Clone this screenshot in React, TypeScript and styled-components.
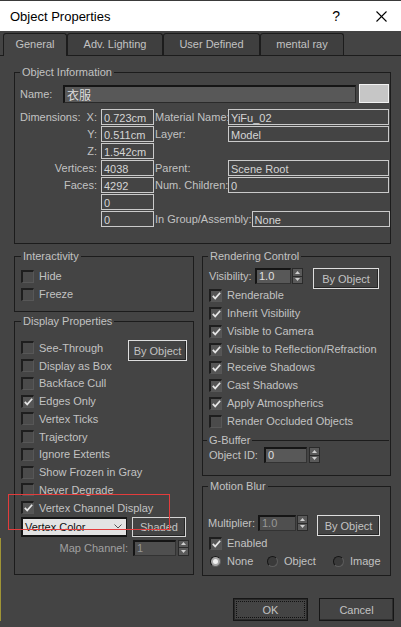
import React from "react";
import styled, { createGlobalStyle } from "styled-components";

const FONT = `"Liberation Sans", Arial, "Noto Sans CJK SC", sans-serif`;
const TEXT = "#c2c2c2";

const GlobalStyle = createGlobalStyle`
  html, body { margin: 0; padding: 0; background: #444444; }
  body { font-family: ${FONT}; font-size: 11px; color: ${TEXT}; }
  * { box-sizing: border-box; }
`;

const Window = styled.div`
  position: relative;
  width: 401px;
  height: 627px;
  overflow: hidden;
  background: #444444;
  font-family: ${FONT};
  font-size: 11px;
  color: ${TEXT};
  display: flex;
  flex-direction: column;
`;

const TitleBar = styled.div`
  height: 31px;
  flex: none;
  background: #ffffff;
  border-top: 1px solid #3a3a3a;
  display: flex;
  align-items: center;
  padding: 0 14px 0 10px;
  color: #000;
  font-size: 13px;
`;
const TitleText = styled.div`
  flex: 1;
`;
const TitleButtons = styled.div`
  display: flex;
  align-items: center;
  gap: 36px;
`;
const HelpGlyph = styled.span`
  font-size: 14px;
  line-height: 14px;
`;

const TabStrip = styled.div`
  height: 25px;
  flex: none;
  display: flex;
  align-items: flex-end;
  padding-left: 3px;
  border-bottom: 1px solid #1c1c1c;
`;
const Tab = styled.div<{ $active?: boolean; $w: number }>`
  width: ${(p) => p.$w}px;
  height: ${(p) => (p.$active ? 23 : 22)}px;
  margin-bottom: ${(p) => (p.$active ? -1 : 0)}px;
  border: 1px solid #1c1c1c;
  border-bottom: none;
  border-radius: 3px 3px 0 0;
  background: ${(p) => (p.$active ? "#444444" : "#3f3f3f")};
  display: flex;
  align-items: flex-start;
  justify-content: center;
  padding-top: 4px;
  color: ${TEXT};
  font-size: 11px;
  line-height: 13px;
`;

const Panel = styled.div`
  flex: 1;
  display: flex;
  flex-direction: column;
  padding: 10px 10px 0 14px;
`;

const Group = styled.fieldset<{ $pad: string; $mt?: number }>`
  margin: ${(p) => p.$mt ?? 0}px 0 0 0;
  min-width: 0;
  border: 1px solid #1c1c1c;
  padding: ${(p) => p.$pad};
`;
const Legend = styled.legend<{ $ml?: number }>`
  padding: 0 2px;
  margin-left: ${(p) => p.$ml ?? 0}px;
  font-size: 11px;
  line-height: 13px;
  color: ${TEXT};
`;
const SubGroup = styled.fieldset`
  margin: 4px -5px 0 -6px;
  min-width: 0;
  border: none;
  border-top: 1px solid #1c1c1c;
  padding: 0 0 0 6px;
`;

/* Object information */
const NameRow = styled.div`
  display: flex;
  align-items: center;
  height: 19px;
`;
const NameLabel = styled.span`
  width: 43px;
  flex: none;
`;
const NameField = styled.div`
  flex: 1;
  height: 18px;
  background: #585858;
  border-top: 2px solid #151515;
  border-left: 2px solid #151515;
  border-right: 1px solid #2a2a2a;
  border-bottom: 1px solid #2a2a2a;
  padding-left: 2px;
  color: #dedede;
  font-family: "Noto Sans CJK SC", ${FONT};
  font-size: 12px;
  line-height: 15px;
`;
const Swatch = styled.div`
  width: 30px;
  height: 19px;
  margin-left: 3px;
  flex: none;
  background: #c6c6c6;
  border: 1px solid #f2f2f2;
`;
const InfoGrid = styled.div`
  display: grid;
  grid-template-columns: 81px 53px 74px 161px;
  grid-auto-rows: 16px;
  row-gap: 1px;
  margin-top: 6px;
`;
const LeftLabel = styled.div<{ $split?: boolean }>`
  display: flex;
  align-items: center;
  justify-content: ${(p) => (p.$split ? "space-between" : "flex-end")};
  padding-right: 4px;
  white-space: nowrap;
`;
const RightLabel = styled.div`
  display: flex;
  align-items: center;
  padding-left: 1px;
  white-space: nowrap;
`;
const BoxField = styled.div<{ $w?: number }>`
  height: 16px;
  ${(p) => (p.$w ? `width: ${p.$w}px; flex: none;` : "")}
  border: 1px solid #cacaca;
  padding: 1px 0 0 2px;
  line-height: 14px;
  color: #d4d4d4;
  white-space: nowrap;
  overflow: hidden;
`;
const Empty = styled.div``;
const GroupCell = styled.div`
  grid-column: 3 / 5;
  display: flex;
  align-items: center;
  justify-content: space-between;
  padding-left: 1px;
  white-space: nowrap;
`;

/* columns */
const Columns = styled.div`
  display: grid;
  grid-template-columns: 180px 189px;
  column-gap: 8px;
  margin-top: 6px;
  align-items: start;
`;
const Column = styled.div`
  display: flex;
  flex-direction: column;
`;

/* checkboxes */
const CheckRow = styled.div<{ $h: number; $between?: boolean }>`
  height: ${(p) => p.$h}px;
  display: flex;
  align-items: center;
  gap: 5px;
  white-space: nowrap;
  justify-content: ${(p) => (p.$between ? "space-between" : "flex-start")};
`;
const CheckBox = styled.span<{ $checked?: boolean }>`
  width: 13px;
  height: 13px;
  flex: none;
  background: ${(p) => (p.$checked ? "#555555" : "#4b4b4b")};
  border-top: 2px solid #1e1e1e;
  border-left: 2px solid #1e1e1e;
  border-right: 1px solid #575757;
  border-bottom: 1px solid #575757;
  display: flex;
  align-items: center;
  justify-content: center;
`;
const CheckPair = styled.span`
  display: flex;
  align-items: center;
  gap: 5px;
`;

const CheckMark = () => (
  <svg width="9" height="8" viewBox="0 0 9 8">
    <polyline points="0.8,3.8 3.2,6.4 8.2,0.8" fill="none" stroke="#e6e6e6" strokeWidth="1.7" />
  </svg>
);

const Check = ({ label, checked, h }: { label: string; checked?: boolean; h: number }) => (
  <CheckRow $h={h}>
    <CheckBox $checked={checked}>{checked && <CheckMark />}</CheckBox>
    <span>{label}</span>
  </CheckRow>
);

/* buttons */
const ByObjectButton = styled.div<{ $w: number; $ml?: number }>`
  width: ${(p) => p.$w}px;
  height: 21px;
  flex: none;
  margin-left: ${(p) => p.$ml ?? 0}px;
  border: 1px solid #dedede;
  box-shadow: inset -1px -1px 0 #262626;
  background: #444444;
  display: flex;
  align-items: center;
  justify-content: center;
  color: ${TEXT};
  white-space: nowrap;
`;
const TopButton = styled(ByObjectButton)`
  align-self: flex-start;
  margin-top: 1px;
`;

/* spinners */
const Row = styled.div<{ $h: number; $mt?: number; $end?: boolean }>`
  height: ${(p) => p.$h}px;
  margin-top: ${(p) => p.$mt ?? 0}px;
  display: flex;
  align-items: flex-start;
  justify-content: ${(p) => (p.$end ? "flex-end" : "flex-start")};
  white-space: nowrap;
`;
const RowLabel = styled.span<{ $w?: number; $ml?: number; $dim?: boolean }>`
  ${(p) => (p.$w !== undefined ? `width: ${p.$w}px; flex: none;` : "")}
  margin-left: ${(p) => p.$ml ?? 0}px;
  line-height: 16px;
  color: ${(p) => (p.$dim ? "#a0a0a0" : TEXT)};
`;
const SpinWrap = styled.div<{ $gap: number }>`
  display: flex;
  gap: ${(p) => p.$gap}px;
  flex: none;
`;
const SpinField = styled.div<{ $w: number; $dim?: boolean }>`
  width: ${(p) => p.$w}px;
  height: 16px;
  background: ${(p) => (p.$dim ? "#4f4f4f" : "#585858")};
  border-top: 2px solid #151515;
  border-left: 2px solid #151515;
  border-right: 1px solid #333;
  border-bottom: 1px solid #333;
  padding-left: 2px;
  line-height: 12px;
  color: ${(p) => (p.$dim ? "#979797" : "#e0e0e0")};
`;
const Arrows = styled.div`
  width: 11px;
  height: 16px;
  display: flex;
  flex-direction: column;
  border: 1px solid #2a2a2a;
  background: #5a5a5a;
`;
const ArrowHalf = styled.div`
  flex: 1;
  display: flex;
  align-items: center;
  justify-content: center;
  & + & {
    border-top: 1px solid #2a2a2a;
  }
`;

const Spin = ({ value, w, dim, gap = 1 }: { value: string; w: number; dim?: boolean; gap?: number }) => (
  <SpinWrap $gap={gap}>
    <SpinField $w={w} $dim={dim}>{value}</SpinField>
    <Arrows>
      <ArrowHalf>
        <svg width="5" height="3" viewBox="0 0 5 3">
          <polygon points="2.5,0 5,3 0,3" fill="#cfcfcf" />
        </svg>
      </ArrowHalf>
      <ArrowHalf>
        <svg width="5" height="3" viewBox="0 0 5 3">
          <polygon points="0,0 5,0 2.5,3" fill="#cfcfcf" />
        </svg>
      </ArrowHalf>
    </Arrows>
  </SpinWrap>
);

/* dropdown */
const SelectRow = styled.div`
  display: flex;
  height: 20px;
  gap: 5px;
`;
const Select = styled.div`
  width: 106px;
  height: 20px;
  background: #e3e3e3;
  border: 2px solid #151515;
  border-right-width: 1px;
  color: #111;
  display: flex;
  align-items: center;
  justify-content: space-between;
  padding: 0 4px 0 2px;
`;
const ShadedButton = styled.div`
  width: 54px;
  height: 20px;
  border: 1px solid #d4d4d4;
  box-shadow: inset -1px -1px 0 #262626;
  background: #444444;
  display: flex;
  align-items: center;
  justify-content: center;
  color: ${TEXT};
`;

/* radios */
const RadioRow = styled.div`
  height: 18px;
  display: flex;
  align-items: center;
  margin-left: 1px;
`;
const RadioItem = styled.span<{ $w?: number }>`
  ${(p) => (p.$w ? `width: ${p.$w}px;` : "")}
  display: flex;
  align-items: center;
  gap: 6px;
`;
const RadioDot = styled.span<{ $on?: boolean }>`
  width: 11px;
  height: 11px;
  flex: none;
  border-radius: 50%;
  background: ${(p) => (p.$on ? "#a8a8a8" : "#3a3a3a")};
  border: 1px solid #161616;
  border-right-color: #5c5c5c;
  border-bottom-color: #5c5c5c;
  display: flex;
  align-items: center;
  justify-content: center;
`;
const RadioCenter = styled.span`
  width: 5px;
  height: 5px;
  border-radius: 50%;
  background: #f2f2f2;
`;

/* footer */
const Footer = styled.div`
  display: flex;
  justify-content: flex-end;
  gap: 11px;
  margin-top: 22px;
  margin-right: -3px;
`;
const DialogButton = styled.div<{ $default?: boolean }>`
  position: relative;
  width: 75px;
  height: 23px;
  background: #444444;
  border: 1px solid #161616;
  box-shadow: ${(p) => (p.$default ? "inset 0 0 0 1px #2a2a2a" : "inset -1px -1px 0 #2e2e2e")};
  display: flex;
  align-items: center;
  justify-content: center;
  color: ${TEXT};
`;
const FocusRing = styled.span`
  position: absolute;
  inset: 2px;
  border: 1px dotted #111;
`;

/* overlays */
const Annotation = styled.div`
  position: absolute;
  left: 8px;
  top: 494px;
  width: 162px;
  height: 36px;
  border: 1px solid #e33c3c;
  pointer-events: none;
`;
const EdgeLine = styled.div`
  position: absolute;
  left: 0;
  top: 538px;
  width: 1px;
  height: 83px;
  background: #a09536;
`;

export default function App() {
  return (
    <>
      <GlobalStyle />
      <Window>
        <TitleBar>
          <TitleText>Object Properties</TitleText>
          <TitleButtons>
            <HelpGlyph>?</HelpGlyph>
            <svg width="11" height="11" viewBox="0 0 11 11">
              <line x1="0.5" y1="0.5" x2="10.5" y2="10.5" stroke="#000" strokeWidth="1.1" />
              <line x1="10.5" y1="0.5" x2="0.5" y2="10.5" stroke="#000" strokeWidth="1.1" />
            </svg>
          </TitleButtons>
        </TitleBar>

        <TabStrip>
          <Tab $active $w={64}>General</Tab>
          <Tab $w={96}>Adv. Lighting</Tab>
          <Tab $w={97}>User Defined</Tab>
          <Tab $w={84}>mental ray</Tab>
        </TabStrip>

        <Panel>
          <Group $pad="5px 1px 16px 5px">
            <Legend>Object Information</Legend>
            <NameRow>
              <NameLabel>Name:</NameLabel>
              <NameField>衣服</NameField>
              <Swatch />
            </NameRow>
            <InfoGrid>
              <LeftLabel $split>
                <span>Dimensions:</span>
                <span>X:</span>
              </LeftLabel>
              <BoxField>0.723cm</BoxField>
              <RightLabel>Material Name:</RightLabel>
              <BoxField>YiFu_02</BoxField>

              <LeftLabel>Y:</LeftLabel>
              <BoxField>0.511cm</BoxField>
              <RightLabel>Layer:</RightLabel>
              <BoxField>Model</BoxField>

              <LeftLabel>Z:</LeftLabel>
              <BoxField>1.542cm</BoxField>
              <Empty />
              <Empty />

              <LeftLabel>Vertices:</LeftLabel>
              <BoxField>4038</BoxField>
              <RightLabel>Parent:</RightLabel>
              <BoxField>Scene Root</BoxField>

              <LeftLabel>Faces:</LeftLabel>
              <BoxField>4292</BoxField>
              <RightLabel>Num. Children:</RightLabel>
              <BoxField>0</BoxField>

              <Empty />
              <BoxField>0</BoxField>
              <Empty />
              <Empty />

              <Empty />
              <BoxField>0</BoxField>
              <GroupCell>
                <span>In Group/Assembly:</span>
                <BoxField $w={138}>None</BoxField>
              </GroupCell>
            </InfoGrid>
          </Group>

          <Columns>
            <Column>
              <Group $pad="4px 6px 8px 6px">
                <Legend>Interactivity</Legend>
                <Check h={18} label="Hide" />
                <Check h={18} label="Freeze" />
              </Group>

              <Group $pad="11px 6px 18px 6px" $mt={3}>
                <Legend>Display Properties</Legend>
                <CheckRow $h={17.75} $between>
                  <CheckPair>
                    <CheckBox />
                    <span>See-Through</span>
                  </CheckPair>
                  <TopButton $w={59}>By Object</TopButton>
                </CheckRow>
                <Check h={17.75} label="Display as Box" />
                <Check h={17.75} label="Backface Cull" />
                <Check h={17.75} label="Edges Only" checked />
                <Check h={17.75} label="Vertex Ticks" />
                <Check h={17.75} label="Trajectory" />
                <Check h={17.75} label="Ignore Extents" />
                <Check h={17.75} label="Show Frozen in Gray" />
                <Check h={17.75} label="Never Degrade" />
                <Check h={17.75} label="Vertex Channel Display" checked />
                <SelectRow>
                  <Select>
                    <span>Vertex Color</span>
                    <svg width="8" height="5" viewBox="0 0 8 5">
                      <polyline points="0.5,0.5 4,4 7.5,0.5" fill="none" stroke="#555" strokeWidth="1" />
                    </svg>
                  </Select>
                  <ShadedButton>Shaded</ShadedButton>
                </SelectRow>
                <Row $h={16} $mt={3} $end>
                  <RowLabel $dim>Map Channel:</RowLabel>
                  <RowLabel $w={5} />
                  <Spin value="1" w={43} dim gap={2} />
                  <RowLabel $w={0} $ml={-2} />
                </Row>
              </Group>
            </Column>

            <Column>
              <Group $pad="5px 6px 12px 6px">
                <Legend $ml={-1}>Rendering Control</Legend>
                <Row $h={18}>
                  <RowLabel $w={46}>Visibility:</RowLabel>
                  <Spin value="1.0" w={36} />
                  <ByObjectButton $w={66} $ml={10}>By Object</ByObjectButton>
                </Row>
                <Check h={18} label="Renderable" checked />
                <Check h={18} label="Inherit Visibility" checked />
                <Check h={18} label="Visible to Camera" checked />
                <Check h={18} label="Visible to Reflection/Refraction" checked />
                <Check h={18} label="Receive Shadows" checked />
                <Check h={18} label="Cast Shadows" checked />
                <Check h={18} label="Apply Atmospherics" checked />
                <Check h={18} label="Render Occluded Objects" />
                <SubGroup>
                  <Legend $ml={-2}>G-Buffer</Legend>
                  <Row $h={16}>
                    <RowLabel $w={55}>Object ID:</RowLabel>
                    <Spin value="0" w={43} gap={2} />
                  </Row>
                </SubGroup>
              </Group>

              <Group $pad="22px 6px 5px 6px" $mt={4}>
                <Legend $ml={-1}>Motion Blur</Legend>
                <Row $h={19}>
                  <RowLabel $w={50} $ml={-1}>Multiplier:</RowLabel>
                  <Spin value="1.0" w={38} dim />
                  <ByObjectButton $w={63} $ml={9}>By Object</ByObjectButton>
                </Row>
                <Check h={18} label="Enabled" checked />
                <RadioRow>
                  <RadioItem $w={57}>
                    <RadioDot $on>
                      <RadioCenter />
                    </RadioDot>
                    <span>None</span>
                  </RadioItem>
                  <RadioItem $w={66}>
                    <RadioDot />
                    <span>Object</span>
                  </RadioItem>
                  <RadioItem>
                    <RadioDot />
                    <span>Image</span>
                  </RadioItem>
                </RadioRow>
              </Group>
            </Column>
          </Columns>

          <Footer>
            <DialogButton $default>
              <FocusRing />
              OK
            </DialogButton>
            <DialogButton>Cancel</DialogButton>
          </Footer>
        </Panel>

        <Annotation />
        <EdgeLine />
      </Window>
    </>
  );
}
